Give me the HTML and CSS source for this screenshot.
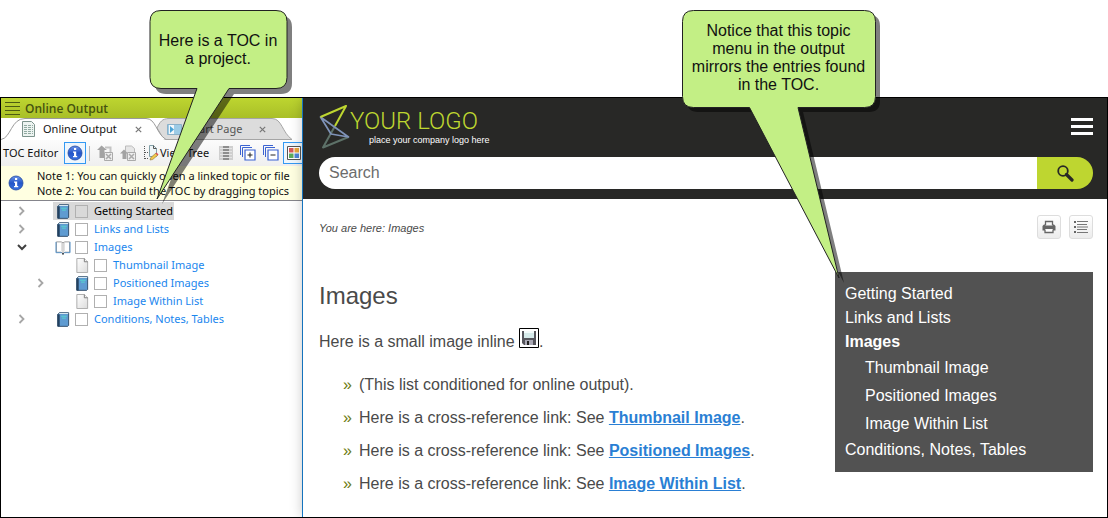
FILE: index.html
```html
<!DOCTYPE html>
<html lang="en">
<head>
<meta charset="utf-8">
<title>Topic menu and TOC</title>
<link rel="stylesheet" href="styles.css">
</head>
<body>
<svg class="defs" aria-hidden="true">
  <defs>
    <linearGradient id="ball" x1="0" y1="0" x2="0" y2="1"><stop offset="0" stop-color="#6b93e8"/><stop offset=".5" stop-color="#2456c8"/><stop offset="1" stop-color="#3a72e0"/></linearGradient>
    <linearGradient id="sheet" x1="0" y1="0" x2="1" y2="1"><stop offset="0" stop-color="#ffffff"/><stop offset="1" stop-color="#dcdcdc"/></linearGradient>
    <symbol id="info" viewBox="0 0 16 16"><circle cx="8" cy="8" r="7" fill="url(#ball)" stroke="#2148a0" stroke-width=".8"/><path d="M7 3h2.200v2H7zM6 6.500h3.200v4.500h1v1.300H6V11h1V7.800H6z" fill="#fff"/></symbol>
    <symbol id="book" viewBox="0 0 14 16"><path d="M1.500 2.500 3 .8h10v13.500l-1 1H1.500z" fill="#5f9bd1" stroke="#2d4a68"/><path d="M1 2.500h2.500v12.800H1z" fill="#24415f"/><path d="M2 2 3.500 1h9v1z" fill="#d8e8f0"/><path d="M5 4.500h6M6 6.500h4" stroke="#55d9cf"/></symbol>
    <symbol id="open" viewBox="0 0 16 16"><path d="M1 2h5l2 1 2-1h5v11h-5l-2 1.500L6 13H1z" fill="#fff" stroke="#999"/><path d="M8 3v11" stroke="#a5a5a5"/><path d="M6.500 3v9M9.500 3v9" stroke="#dcdcdc"/><path d="M.5 2v11.500h6L8 15l1.500-1.500h6V2" fill="none" stroke="#5591c7"/><path d="M7 14h2v1.500H7z" fill="#333"/></symbol>
    <symbol id="page" viewBox="0 0 13 16"><path d="M1 .5h8L12.500 4v11.500H1z" fill="url(#sheet)" stroke="#a9a9a9"/><path d="M9 .5V4h3.500" fill="#f5f5f5" stroke="#777"/></symbol>
    <symbol id="chev" viewBox="0 0 8 10"><path d="m1.500 1 4 4-4 4" fill="none" stroke="#a6a6a6" stroke-width="1.800"/></symbol>
    <symbol id="chevdown" viewBox="0 0 10 8"><path d="m1 2 4 4 4-4" fill="none" stroke="#404040" stroke-width="2"/></symbol>
  </defs>
</svg>

<main class="frame">
  <section class="editor" aria-label="TOC editor">
    <header class="titlebar">
      <svg class="grip" viewBox="0 0 15 13"><path d="M0 .5h15M0 4.500h15M0 8.500h15M0 12.500h15" stroke="#4d5c12"/></svg>
      <span>Online Output</span>
    </header>
    <nav class="tabs">
      <button class="tab tab-active">
        <svg class="tab-shape" viewBox="0 0 165 22" preserveAspectRatio="none"><path d="M0 21.500C10 20 10 .5 24 .5h121c10 0 10 15 20 21" fill="#fff" stroke="#9a9a9a"/></svg>
        <svg class="icon-doc" viewBox="0 0 13 16"><path d="M.5.500h9l3 3v12H.5z" fill="#edf4f1" stroke="#7c938c"/><path d="M2 4.500h9M2 6.500h9M2 8.500h9M2 10.500h9M2 12.500h9" stroke="#91aaa2" stroke-dasharray="3 1"/></svg>
        <span>Online Output</span>
        <svg class="close" viewBox="0 0 7 7"><path d="m.8.8 5.400 5.400m0-5.400L.8 6.200" stroke="#777" stroke-width="1.200"/></svg>
      </button>
      <button class="tab tab-rest">
        <svg class="tab-shape" viewBox="0 0 136 22" preserveAspectRatio="none"><path d="M0 10C3 4 5 .5 12 .5h103c10 0 10 14 20 21H7C4 18 3 14 0 10z" fill="#dcdcdc" stroke="#a5a5a5"/></svg>
        <svg class="icon-start" viewBox="0 0 15 14"><path d="M.5 2.500h14v10H.5z" fill="#9ccbe6" stroke="#8ab0c8"/><path d="M2 3h5v9H2z" fill="#f2f7fa"/><path d="m3 4 4 3.500L3 11z" fill="#4aa3d6"/></svg>
        <span>Start Page</span>
        <svg class="close" viewBox="0 0 7 7"><path d="m.8.8 5.400 5.400m0-5.400L.8 6.200" stroke="#777" stroke-width="1.200"/></svg>
      </button>
    </nav>
    <div class="toolbar">
      <span class="tool-name">TOC Editor</span>
      <button class="tool tool-on" aria-label="Show notes"><svg class="i16"><use href="#info"/></svg></button>
      <i class="sep"></i>
      <button class="tool" aria-label="Move topic"><svg class="i16" viewBox="0 0 16 16"><path d="M4.500.500 0 5h2.500v8h5V5H10z" fill="#a3a3a3"/><path d="M8 2.500h5.500v4.500" fill="none" stroke="#c4c4c4" stroke-width="2"/><path d="M7.500 7.500h8v8h-8z" fill="#eee" stroke="#aaa"/><path d="m9 9 5 5m0-5-5 5" stroke="#aaa" stroke-width="1.500"/></svg></button>
      <button class="tool" aria-label="Move up"><svg class="i16" viewBox="0 0 16 16"><path d="M5.500 8V1h6l3 2.500V8" fill="#e6e6e6" stroke="#bbb"/><path d="M4 4.500 0 8.500h2.500V14h4V8.500H8z" fill="#a3a3a3"/><path d="M7.500 7.500h8v8h-8z" fill="#eee" stroke="#aaa"/><path d="m9 9 5 5m0-5-5 5" stroke="#aaa" stroke-width="1.500"/></svg></button>
      <button class="tool tool-view"><svg class="i16" viewBox="0 0 16 16"><path d="M1.500 1v13M2 7.500h5M2 13.500h4" stroke="#555" stroke-dasharray="1 1"/><path d="M6.500.500h4l3 3v8h-7z" fill="#eef5f7" stroke="#82a0a8"/><path d="M10.500.500v3h3" fill="none" stroke="#555"/><path d="m7 15 .8-2.500L13 8l2 2-5.300 4.500z" fill="#f1c84c" stroke="#8a743a" stroke-width=".6"/><path d="m12.500 8.500 1-1 2 2-1 1z" fill="#d84b55"/></svg><span>View Tree</span></button>
      <button class="tool tool-list" aria-label="Properties"><svg class="i14" viewBox="0 0 14 14"><path d="M0 0h14v14H0z" fill="#cfcfcf"/><path d="M4 0h6v14H4z" fill="#8e8e8e"/><path d="M1 2.500h12M1 5.500h12M1 8.500h12M1 11.500h12" stroke="#e5e5e5"/></svg></button>
      <button class="tool" aria-label="Expand all"><svg class="i16" viewBox="0 0 16 16"><path d="M.5 10V.5H10M2.500 12V2.500H12" fill="none" stroke="#3b63d2"/><path d="M5 5h10v10H5z" fill="#fff" stroke="#3b63d2" stroke-width="1.200"/><path d="M7.500 10h5M10 7.500v5" stroke="#222"/></svg></button>
      <button class="tool" aria-label="Collapse all"><svg class="i16" viewBox="0 0 16 16"><path d="M.5 10V.5H10M2.500 12V2.500H12" fill="none" stroke="#3b63d2"/><path d="M5 5h10v10H5z" fill="#fff" stroke="#3b63d2" stroke-width="1.200"/><path d="M7.500 10h5" stroke="#222"/></svg></button>
      <button class="tool tool-on" aria-label="Colors"><svg class="i14" viewBox="0 0 14 14"><path d="M.5.500h13v13H.5z" fill="#fff" stroke="#555"/><path d="M2 2h4.500v4.500H2z" fill="#d85858"/><path d="M7.500 2H12v4.500H7.500z" fill="#e9a63c"/><path d="M2 7.500h4.500V12H2z" fill="#5caa5c"/><path d="M7.500 7.500H12V12H7.500z" fill="#5286d8"/></svg></button>
    </div>
    <div class="notes">
      <svg class="i16"><use href="#info"/></svg>
      <div>
        <p>Note 1: You can quickly open a linked topic or file</p>
        <p>Note 2: You can build the TOC by dragging topics</p>
      </div>
    </div>
    <ul class="tree">
      <li class="row"><svg class="arrow"><use href="#chev"/></svg><label class="entry chosen"><svg class="book"><use href="#book"/></svg><input type="checkbox"><span>Getting Started</span></label></li>
      <li class="row"><svg class="arrow"><use href="#chev"/></svg><label class="entry"><svg class="book"><use href="#book"/></svg><input type="checkbox"><span>Links and Lists</span></label></li>
      <li class="row"><svg class="arrow arrow-down"><use href="#chevdown"/></svg><label class="entry"><svg class="book"><use href="#open"/></svg><input type="checkbox"><span>Images</span></label></li>
      <li class="row child"><svg class="arrow"></svg><label class="entry"><svg class="book"><use href="#page"/></svg><input type="checkbox"><span>Thumbnail Image</span></label></li>
      <li class="row child"><svg class="arrow"><use href="#chev"/></svg><label class="entry"><svg class="book"><use href="#book"/></svg><input type="checkbox"><span>Positioned Images</span></label></li>
      <li class="row child"><svg class="arrow"></svg><label class="entry"><svg class="book"><use href="#page"/></svg><input type="checkbox"><span>Image Within List</span></label></li>
      <li class="row"><svg class="arrow"><use href="#chev"/></svg><label class="entry"><svg class="book"><use href="#book"/></svg><input type="checkbox"><span>Conditions, Notes, Tables</span></label></li>
    </ul>
  </section>

  <section class="site" aria-label="Output">
    <header class="site-head">
      <div class="brand-row">
        <a class="logo" href="#">
          <svg class="logo-mark" viewBox="0 0 31 45"><g fill="none" stroke-linejoin="round"><path d="M16 22 4 43.500 29.500 33" stroke="#5d7168" stroke-width="2"/><path d="M1.500 13 29.500 33 12 30z" stroke="#7f93b8" stroke-width="1.700"/><path d="M16 22 27 2 1.500 13" stroke="#bed630" stroke-width="2"/></g></svg>
          <span class="logo-text"><strong>YOUR LOGO</strong><small>place your company logo here</small></span>
        </a>
        <button class="burger" aria-label="Menu"><svg viewBox="0 0 22 17"><path d="M0 1.500h22M0 8.500h22M0 15.500h22" stroke="#fff" stroke-width="3"/></svg></button>
      </div>
      <form class="search">
        <input type="text" placeholder="Search" aria-label="Search">
        <button type="button" aria-label="Submit search"><svg viewBox="0 0 17 17"><circle cx="6" cy="6" r="4.800" fill="none" stroke="#282826" stroke-width="1.800"/><path d="m9.500 9.500 5.500 5.500" stroke="#282826" stroke-width="3.200" stroke-linecap="round"/></svg></button>
      </form>
    </header>
    <div class="page">
      <article class="topic">
        <p class="crumbs">You are here: Images</p>
        <h1>Images</h1>
        <p class="lead">Here is a small image inline <svg class="disk" viewBox="0 0 20 20"><path d="M.5.500h19v19H.5z" fill="#fff" stroke="#000"/><path d="M3 3h14v14H5l-2-2z" fill="#55555c"/><path d="M5 3h10v7H5z" fill="#d5eaea"/><path d="M5 3h10v2H5z" fill="#f3fbfb"/><path d="M6 12h8v5H6z" fill="#aaa9b5"/><path d="M8 13h2v4H8z" fill="#222"/></svg>.</p>
        <ul class="points">
          <li>(This list conditioned for online output).</li>
          <li>Here is a cross-reference link: See <a href="#">Thumbnail Image</a>.</li>
          <li>Here is a cross-reference link: See <a href="#">Positioned Images</a>.</li>
          <li>Here is a cross-reference link: See <a href="#">Image Within List</a>.</li>
        </ul>
      </article>
      <aside class="side">
        <div class="actions">
          <button aria-label="Print"><svg viewBox="0 0 14 14"><path d="M3.500 5V1.500h7V5" fill="none" stroke="#666" stroke-width="1.300"/><path d="M2 4.500h1.500v1h7v-1H12L13.500 6v4.500H11V9H3v1.500H.5V6z" fill="#666"/><path d="M3 9.500v3h8v-3" fill="#fff" stroke="#666" stroke-width="1.300"/></svg></button>
          <button aria-label="Contents"><svg viewBox="0 0 14 14"><path d="M0 2h2M0 7h2M0 12h2" stroke="#666" stroke-width="2"/><path d="M3 1.500h11M3 4.500h10M3 7h11M3 9.500h10M3 12.500h11" stroke="#777"/></svg></button>
        </div>
        <ul class="menu">
          <li><a href="#">Getting Started</a></li>
          <li><a href="#">Links and Lists</a></li>
          <li><a class="current" href="#">Images</a>
            <ul>
              <li><a href="#">Thumbnail Image</a></li>
              <li><a href="#">Positioned Images</a></li>
              <li><a href="#">Image Within List</a></li>
            </ul>
          </li>
          <li><a href="#">Conditions, Notes, Tables</a></li>
        </ul>
      </aside>
    </div>
  </section>
</main>

<div class="callout callout-toc">
  <svg viewBox="0 0 144 196"><path d="M17 6h115q11 0 11 11v56q0 11-11 11H85L13 194 53 84H17Q6 84 6 73V17Q6 6 17 6z" fill="#000" fill-opacity=".5"/><path d="M12 .5h115q11 0 11 11v56q0 11-11 11H80L8 189 48 78.500H12q-11 0-11-11v-56Q1 .5 12 .5z" fill="#c3ef85" stroke="#222"/></svg>
  <p>Here is a TOC in<br>a project.</p>
</div>
<div class="callout callout-menu">
  <svg viewBox="0 0 200 276"><path d="M16 5h171q11 0 11 11v75q0 11-11 11h-66l41 171L72 102H16Q5 102 5 91V16Q5 5 16 5z" fill="#000" fill-opacity=".5"/><path d="M11.500.500h171q11 0 11 11v75q0 11-11 11H116L157 268 67.500 97.500h-56q-11 0-11-11v-75q0-11 11-11z" fill="#c3ef85" stroke="#222"/></svg>
  <p>Notice that this topic<br>menu in the output<br>mirrors the entries found<br>in the TOC.</p>
</div>
</body>
</html>
```
FILE: styles.css
```css
* { box-sizing: border-box; }
body {
  margin: 0;
  padding-top: 97px;
  position: relative;
  background: #fff;
  font-family: "Liberation Sans", Arial, sans-serif;
  font-size: 16px;
  color: #4a4a4a;
}
p, h1, ul { margin: 0; padding: 0; }
ul { list-style: none; }
button { margin: 0; padding: 0; border: 0; background: none; font: inherit; color: inherit; }
svg { display: block; flex: none; }
.defs { position: absolute; width: 0; height: 0; }
.i16 { width: 16px; height: 16px; }
.i14 { width: 14px; height: 14px; }

.frame {
  display: flex;
  min-height: calc(100vh - 97px);
  border: 1px solid #000;
  overflow: hidden;
}

/* TOC editor */
.editor {
  flex: 0 0 302px;
  overflow: hidden;
  border-right: 1px solid #1883d7;
  font-family: "Noto Sans", "Open Sans", sans-serif;
  font-size: 11px;
  color: #111;
  white-space: nowrap;
}
.titlebar {
  display: flex;
  align-items: center;
  gap: 5px;
  height: 20px;
  padding-left: 4px;
  background: linear-gradient(#bdd530, #a9bf27);
  color: #45520f;
  font-family: "Open Sans", sans-serif;
  font-size: 12px;
  font-weight: 600;
}
.grip { width: 15px; height: 13px; }
.tabs { display: flex; height: 22px; background: #fff; }
.tab { position: relative; display: flex; align-items: center; height: 22px; }
.tab > * { position: relative; }
.tab > .tab-shape { position: absolute; left: 0; top: 0; width: 100%; height: 22px; }
.tab-active { width: 165px; padding-left: 21px; gap: 8px; z-index: 1; }
.tab-active .close { margin-left: 10px; }
.tab-rest { width: 136px; margin-left: -9px; padding-left: 10px; gap: 7px; color: #555; }
.tab-rest .close { margin-left: 10px; }
.icon-doc { width: 13px; height: 16px; }
.icon-start { width: 15px; height: 14px; }
.close { width: 7px; height: 7px; }
.toolbar {
  display: flex;
  align-items: center;
  gap: 7px;
  height: 26px;
  padding-left: 2px;
  background: linear-gradient(#fcfcfc, #efefef);
}
.toolbar > * { flex: none; }
.tool { display: flex; align-items: center; justify-content: center; gap: 1px; }
.tool-name { width: 57px; margin-right: -3px; }
.tool-on { width: 22px; height: 22px; border: 1px solid #3399f3; background: #eef6fd; }
.tool-view { gap: 1px; }
.tool-list { margin-left: 3px; }
.toolbar .tool-on:last-child { margin-left: -3px; }
.sep { width: 1px; height: 15px; margin-left: -4px; background: #bbb; }
.tab span, .tool-name, .tool-view span, .entry span { padding-bottom: 2px; }
.notes {
  display: flex;
  align-items: center;
  gap: 13px;
  height: 35px;
  padding-left: 7px;
  background: #ffffe1;
  border-bottom: 1px solid #85858c;
  line-height: 15px;
}
.tree { padding-top: 1px; }
.row { display: flex; align-items: center; height: 18px; padding-left: 17px; color: #1a86ee; }
.child { padding-left: 36px; }
.arrow { width: 8px; height: 10px; margin-right: 27px; }
.arrow-down { width: 10px; height: 8px; margin: 0 26px 0 -1px; }
.entry { display: flex; align-items: center; height: 18px; padding: 0 1px 0 2px; }
.chosen { background: #d9d9d9; color: #000; }
.book { width: 16px; height: 15px; }
.row input {
  appearance: none;
  width: 13px;
  height: 13px;
  margin: 0 6px 0 4px;
  border: 1px solid #b0b0b0;
}

/* Output site */
.site {
  flex: 1;
  min-width: 0;
  background: #fff;
  box-shadow: 0 0 12px rgba(0, 0, 0, .25);
}
.site-head { padding: 5px 14px 10px 16px; background: #282826; }
.brand-row { display: flex; justify-content: space-between; align-items: center; height: 46px; }
.logo { display: flex; color: #fff; text-decoration: none; }
.logo-mark { width: 31px; height: 45px; }
.logo-text { display: flex; flex-direction: column; }
.logo-text strong {
  color: #bed630;
  font-family: Roboto, "Liberation Sans", sans-serif;
  font-size: 24px;
  line-height: 30px;
  padding-top: 2px;
  font-weight: 300;
}
.logo-text small { padding-left: 19px; font-size: 9px; line-height: 8px; }
.burger svg { width: 22px; height: 17px; }
.search { display: flex; height: 32px; margin-top: 8px; }
.search input {
  flex: 1;
  min-width: 0;
  padding: 0 10px;
  border: 0;
  border-radius: 16px 0 0 16px;
  background: #fff;
  font: inherit;
}
.search input::placeholder { color: #6c6c6c; opacity: 1; }
.search button {
  display: flex;
  align-items: center;
  justify-content: center;
  width: 56px;
  border-radius: 0 16px 16px 0;
  background: #bed630;
}
.search svg { width: 17px; height: 17px; }
.page { display: flex; gap: 24px; padding: 16px 14px 16px 16px; }
.topic { flex: 1; min-width: 0; }
.crumbs { font-size: 11px; line-height: 26px; font-style: italic; }
h1 { margin-top: 40px; font-size: 24px; line-height: 30px; font-weight: 400; }
.lead { margin-top: 17px; line-height: 26px; }
.disk { display: inline-block; width: 20px; height: 20px; vertical-align: -1px; }
.points { margin-top: 18px; padding-left: 24px; }
.points li { display: block; line-height: 24px; margin-bottom: 9px; }
.points li:last-child { margin-bottom: 0; }
.points li::before { content: "»"; display: inline-block; width: 16px; color: #6b7a10; }
.points a { color: #2a7fd4; font-weight: 700; }
.side { flex: 0 0 258px; }
.actions { display: flex; justify-content: flex-end; gap: 8px; }
.actions button {
  display: flex;
  align-items: center;
  justify-content: center;
  width: 24px;
  height: 24px;
  border: 1px solid #ddd;
  border-radius: 3px;
  background: linear-gradient(#fff, #ececec);
}
.actions svg { width: 14px; height: 14px; }
.menu { margin-top: 33px; padding: 10px; background: #525252; line-height: 24px; }
.menu a { color: #fff; text-decoration: none; }
.menu .current { font-weight: 700; }
.menu ul { padding-left: 20px; line-height: 28px; }

/* Callouts over the two windows */
.callout { position: absolute; color: #111; line-height: 18px; text-align: center; }
.callout svg { position: absolute; left: 0; top: 0; }
.callout p { position: relative; }
.callout-toc { left: 149px; top: 10px; width: 138px; padding-top: 22px; }
.callout-toc svg { width: 144px; height: 196px; }
.callout-menu { right: 233px; top: 10px; width: 193px; padding-top: 12px; }
.callout-menu svg { width: 200px; height: 276px; }
```
